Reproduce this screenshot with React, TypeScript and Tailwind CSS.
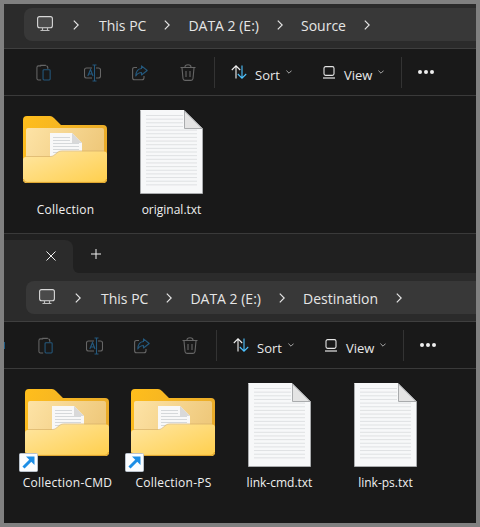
const font = "[font-family:'Open_Sans','Noto_Sans',sans-serif]";

function Chevron() {
  return (
    <svg width="6" height="10" viewBox="0 0 6 10" fill="none" className="shrink-0">
      <path d="M0.8 0.6 L5.2 5 L0.8 9.4" stroke="#e6e6e6" strokeWidth="1.2" />
    </svg>
  );
}

function Monitor() {
  return (
    <svg width="16" height="16" viewBox="0 0 16 16" fill="none" className="shrink-0">
      <rect x="0.6" y="0.6" width="14.8" height="11.2" rx="2" fill="#4a4a4a" stroke="#d8d8d8" strokeWidth="1.1" />
      <path d="M3.5 14.5 H12.5 M5.5 12 V14.5 M10.5 12 V14.5" stroke="#bdbdbd" strokeWidth="1.2" />
    </svg>
  );
}

function Small() {
  return (
    <svg width="6" height="4" viewBox="0 0 6 4" fill="none" className="shrink-0">
      <path d="M0.4 0.6 L3 3.2 L5.6 0.6" stroke="#a8a8a8" strokeWidth="1" />
    </svg>
  );
}

function Clipboard() {
  return (
    <svg width="16" height="17" viewBox="0 0 16 18" fill="none">
      <path d="M5 2 H2.2 Q0.5 2 0.5 3.7 V15.3 Q0.5 17 2.2 17 H5" stroke="#666666" strokeWidth="1.1" />
      <path d="M4 1.5 H10 M10.5 2 Q12 2 12 4 V5" stroke="#666666" strokeWidth="1.3" />
      <rect x="7" y="6" width="7.5" height="11" rx="1" stroke="#24597e" strokeWidth="1.1" />
    </svg>
  );
}

function Rename() {
  return (
    <svg width="17" height="18" viewBox="0 0 17 18" fill="none">
      <path d="M8 4 H2.5 Q0.5 4 0.5 6 V12 Q0.5 14 2.5 14 H8 M12 4 H14.5 Q16.5 4 16.5 6 V12 Q16.5 14 14.5 14 H12" stroke="#666666" strokeWidth="1.1" />
      <path d="M3.8 12 L6.5 5.5 L9 12 M4.8 10 H8.2" stroke="#24597e" strokeWidth="1.1" />
      <path d="M8.5 1 H12.5 M10.5 1 V17 M8.5 17 H12.5" stroke="#24597e" strokeWidth="1.1" />
    </svg>
  );
}

function Share() {
  return (
    <svg width="16" height="16" viewBox="0 0 16 16" fill="none">
      <path d="M5 2.5 H2.5 Q0.6 2.5 0.6 4.5 V12.8 Q0.6 14.8 2.5 14.8 H10 Q12 14.8 12 12.8 V11" stroke="#666666" strokeWidth="1.1" />
      <path d="M9.5 0.8 L15.2 5.5 L9.5 10 V7.5 Q6 7.5 3.8 11 Q4 4 9.5 3.5 Z" stroke="#24597e" strokeWidth="1.1" strokeLinejoin="round" />
    </svg>
  );
}

function Trash() {
  return (
    <svg width="16" height="17" viewBox="0 0 16 17" fill="none">
      <path d="M0.5 3.5 H15.5 M5 3 Q5 0.7 8 0.7 Q11 0.7 11 3" stroke="#666666" strokeWidth="1.1" />
      <path d="M2 4 L3 14.5 Q3.2 16.4 5 16.4 H11 Q12.8 16.4 13 14.5 L14 4 M6 7 V13 M10 7 V13" stroke="#666666" strokeWidth="1.1" />
    </svg>
  );
}

function Sort() {
  return (
    <svg width="16" height="14" viewBox="0 0 16 14" fill="none" className="shrink-0">
      <path d="M5 13.5 V1 M0.8 5 L5 0.8 L9.2 5" stroke="#f0f0f0" strokeWidth="1.1" />
      <path d="M11 0.5 V13 M6.8 9 L11 13.2 L15.2 9" stroke="#4cc2ff" strokeWidth="1.1" />
    </svg>
  );
}

function View() {
  return (
    <svg width="12" height="13" viewBox="0 0 12 13" fill="none" className="shrink-0">
      <rect x="1" y="0.6" width="10" height="8.8" rx="1.6" stroke="#e4e4e4" strokeWidth="1.1" />
      <path d="M0 12 H12" stroke="#e4e4e4" strokeWidth="1.2" />
    </svg>
  );
}

function Toolbar({ left, mark }: { left: string; mark?: boolean }) {
  return (
    <div className={`relative flex h-[46px] items-center bg-[#191919] ${left} border-b border-[#3a3a3a] box-content`}>
      {mark && <div className="absolute left-0 top-[20px] h-[7px] w-px bg-[#1f5c85]" />}
      {[<Clipboard />, <Rename />, <Share />, <Trash />].map((icon, i) => (
        <div key={i} className="flex h-[46px] w-12 items-center justify-center pt-[1px]">{icon}</div>
      ))}
      <div className="ml-[2px] h-[31px] w-px bg-[#333333]" />
      <div className="ml-4 flex items-center gap-2">
        <Sort />
        <span className="pt-[6px] text-[13px] leading-none text-[#e8e8e8]">Sort</span>
      </div>
      <div className="ml-[6px]"><Small /></div>
      <div className="ml-[31px] flex items-center gap-[9px]">
        <View />
        <span className="pt-[6px] text-[13px] leading-none text-[#e8e8e8]">View</span>
      </div>
      <div className="ml-[6px]"><Small /></div>
      <div className="ml-[17px] h-[31px] w-px bg-[#333333]" />
      <div className="ml-4 flex gap-[2px]">
        <span className="size-1 rounded-full bg-[#eeeeee]" />
        <span className="size-1 rounded-full bg-[#eeeeee]" />
        <span className="size-1 rounded-full bg-[#eeeeee]" />
      </div>
    </div>
  );
}

function Address({ parts, box, left }: { parts: string[]; box: string; left: string }) {
  return (
    <div className={`flex h-10 items-start bg-[#2b2b2b] border-b border-[#3f3f3f] box-content ${box}`}>
      <div className={`flex h-[33px] flex-1 items-center gap-[18px] rounded-l-lg bg-[#383838] pl-[13px] pt-[1px] ${left}`}>
        <div className="mb-[2px] mr-[2px]"><Monitor /></div>
        <Chevron />
        {parts.map((p, i) => (
          <div key={p} className="contents">
            <span className={`whitespace-nowrap pt-[1px] text-[14px] leading-none text-[#e6e6e6] ${i === 0 ? "ml-[2px]" : ""}`}>{p}</span>
            <Chevron />
          </div>
        ))}
      </div>
    </div>
  );
}

function DocLines({ x1, x2, y, n, step, c }: { x1: number; x2: number; y: number; n: number; step: number; c: string }) {
  return (
    <>
      {Array.from({ length: n }).map((_, i) => (
        <rect key={i} x={x1} y={y + i * step} width={x2 - x1} height="1" fill={c} />
      ))}
    </>
  );
}

function FolderIcon() {
  return (
    <svg width="84" height="67" viewBox="0 0 84 67" fill="none">
      <defs>
        <linearGradient id="fBack" x1="0" y1="0" x2="1" y2="0.4">
          <stop offset="0" stopColor="#ffbe1c" />
          <stop offset="1" stopColor="#e9ab2a" />
        </linearGradient>
        <linearGradient id="fPaper" x1="0" y1="0" x2="1" y2="0.3">
          <stop offset="0" stopColor="#fde3a6" />
          <stop offset="1" stopColor="#efc97c" />
        </linearGradient>
        <linearGradient id="fFront" x1="0" y1="0" x2="1" y2="1">
          <stop offset="0" stopColor="#ffe6a2" />
          <stop offset="1" stopColor="#ffcf4c" />
        </linearGradient>
      </defs>
      <path d="M4 0 H27 Q29 0 31 2 L38 9 H80 Q84 9 84 13 V63 Q84 67 80 67 H4 Q0 67 0 63 V4 Q0 0 4 0 Z" fill="url(#fBack)" />
      <rect x="3" y="12" width="78" height="40" rx="2" fill="url(#fPaper)" />
      <path d="M27 17 H49 L59 27 V45 H27 Z" fill="#f8f8f8" />
      <path d="M49 17 L59 27 H49 Z" fill="#d9d9d9" />
      <DocLines x1={30} x2={47} y={21} n={2} step={3} c="#d5d8da" />
      <DocLines x1={30} x2={56} y={27} n={4} step={3} c="#d5d8da" />
      <path d="M3 40 H28 Q30 40 32 38 L35 35.5 Q36.5 34.5 39 34.5 H81 V36 H39 Q37 36 35.5 37 L32.5 39.5 Q30.5 41.5 28 41.5 H3 Z" fill="#d9b266" opacity="0.7" />
      <path d="M3 41 H28 Q30 41 32 39 L35 36.5 Q36.5 35.5 39 35.5 H81 Q84 35.5 84 38.5 V63 Q84 67 80 67 H4 Q0 67 0 63 V44 Q0 41 3 41 Z" fill="url(#fFront)" />
      <path d="M0.5 63 Q0.5 66.4 4 66.4 H80 Q83.5 66.4 83.5 63" stroke="#dca12c" strokeWidth="1" />
    </svg>
  );
}

function FileIcon() {
  return (
    <svg width="63" height="84" viewBox="0 0 63 84" fill="none">
      <path d="M0.5 0.5 H44 L62.5 18.5 V83.5 H0.5 Z" fill="#f7f8f9" stroke="#a9abad" strokeWidth="1" />
      <path d="M0.5 0.5 H44" stroke="#f7f8f9" strokeWidth="1" />
      <path d="M44.5 1 L62 18.5 H44.5 Z" fill="#e4e4e4" stroke="#a9abad" strokeWidth="1" strokeLinejoin="round" />
      <DocLines x1={6} x2={43} y={5} n={4} step={3.65} c="#dfe1e3" />
      <DocLines x1={6} x2={57} y={19.6} n={16} step={3.65} c="#dfe1e3" />
    </svg>
  );
}

function Shortcut() {
  return (
    <svg width="19" height="19" viewBox="0 0 19 19" fill="none" className="absolute left-[-6px] top-[64px]">
      <rect x="0.5" y="0.5" width="18" height="18" rx="1" fill="#fbfdff" stroke="#b9c2cc" />
      <path d="M4.5 14.5 L13 6" stroke="#1c8ee6" strokeWidth="3" />
      <path d="M7 3.5 H15.5 V12 Z" fill="#1c8ee6" />
    </svg>
  );
}

function Item({ kind, label, link }: { kind: "folder" | "file"; label: string; link?: boolean }) {
  return (
    <div className="flex w-[106px] flex-col items-center">
      <div className="flex h-[84px] items-start justify-center">
        <div className={kind === "folder" ? "relative mt-[6px]" : "relative"}>
          {kind === "folder" ? <FolderIcon /> : <FileIcon />}
          {link && <Shortcut />}
        </div>
      </div>
      <div className={`mt-[8px] pl-[1px] text-[12px] leading-[16px] text-[#f0f0f0] whitespace-nowrap ${kind === "folder" ? "tracking-[0.25px]" : ""}`}>{label}</div>
    </div>
  );
}

export default function App() {
  return (
    <div className={`h-[527px] w-[480px] overflow-hidden bg-[#808080] p-1 ${font}`}>
      <div className="flex h-full w-[472px] flex-col bg-[#191919]">
        <Address parts={["This PC", "DATA 2 (E:)", "Source"]} box="pt-1" left="ml-5" />
        <Toolbar left="pl-4" />
        <div className="flex h-[137px] bg-[#191919] pl-2 pt-[14px]">
          <Item kind="folder" label="Collection" />
          <Item kind="file" label="original.txt" />
        </div>
        <div className="flex h-10 border-t border-[#3a3a3a] bg-[#2b2b2b]">
          <div className="flex w-[69px] flex-col bg-[#202020] pt-[6px]">
            <div className="flex flex-1 items-center justify-end rounded-tr-lg bg-[#2b2b2b] pb-[1px] pr-[17px]">
              <svg width="10" height="10" viewBox="0 0 10 10" fill="none">
                <path d="M0.5 0.5 L9.5 9.5 M9.5 0.5 L0.5 9.5" stroke="#f0f0f0" strokeWidth="1" />
              </svg>
            </div>
          </div>
          <div className="flex flex-1 items-center rounded-bl-md bg-[#202020] pl-[18px]">
            <svg width="10" height="10" viewBox="0 0 10 10" fill="none">
              <path d="M5 0 V10 M0 5 H10" stroke="#f0f0f0" strokeWidth="1" />
            </svg>
          </div>
        </div>
        <Address parts={["This PC", "DATA 2 (E:)", "Destination"]} box="pt-2" left="ml-[22px]" />
        <Toolbar left="pl-[18px]" mark />
        <div className="flex flex-1 bg-[#191919] pl-[10px] pt-[14px]">
          <Item kind="folder" label="Collection-CMD" link />
          <Item kind="folder" label="Collection-PS" link />
          <Item kind="file" label="link-cmd.txt" />
          <Item kind="file" label="link-ps.txt" />
        </div>
      </div>
    </div>
  );
}
